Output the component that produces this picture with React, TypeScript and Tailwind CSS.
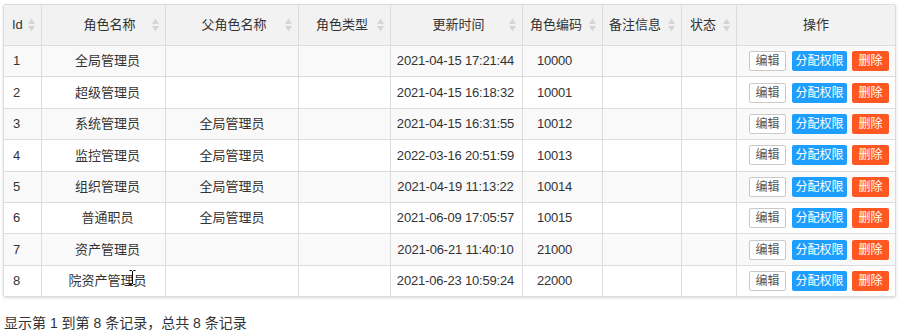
import React from "react";

const rows = [
  { id: "1", name: "全局管理员", parent: "", time: "2021-04-15 17:21:44", code: "10000" },
  { id: "2", name: "超级管理员", parent: "", time: "2021-04-15 16:18:32", code: "10001" },
  { id: "3", name: "系统管理员", parent: "全局管理员", time: "2021-04-15 16:31:55", code: "10012" },
  { id: "4", name: "监控管理员", parent: "全局管理员", time: "2022-03-16 20:51:59", code: "10013" },
  { id: "5", name: "组织管理员", parent: "全局管理员", time: "2021-04-19 11:13:22", code: "10014" },
  { id: "6", name: "普通职员", parent: "全局管理员", time: "2021-06-09 17:05:57", code: "10015" },
  { id: "7", name: "资产管理员", parent: "", time: "2021-06-21 11:40:10", code: "21000" },
  { id: "8", name: "院资产管理员", parent: "", time: "2021-06-23 10:59:24", code: "22000" },
];

function SortIcon() {
  return (
    <svg
      width="7"
      height="14"
      viewBox="0 0 7 14"
      className="absolute right-[6px] top-1/2 -translate-y-1/2"
    >
      <path d="M0 6 L3.5 0.5 L7 6 Z" fill="#d6d6d6" />
      <path d="M0 8 L7 8 L3.5 13.5 Z" fill="#d6d6d6" />
    </svg>
  );
}

const grid =
  "grid grid-cols-[38px_124px_133px_92px_132px_80px_79px_55px_158px]";

export default function App() {
  return (
    <div
      className="w-[899px] h-[336px] bg-white text-[#333]"
      style={{ fontFamily: '"Liberation Sans", Arial, "Noto Sans CJK SC", sans-serif' }}
    >
      <div className="pt-[4px] pl-[3px]">
        <div className="w-[893px] border border-[#dcdcdc] rounded-[2px] shadow-[0_1px_3px_rgba(0,0,0,0.14)] text-[13px]">
          {/* header */}
          <div className={`${grid} h-[41px] bg-[#f2f2f2] border-b border-[#dcdcdc]`}>
            <div className="relative flex items-center pl-[8px] border-r border-[#dcdcdc]">
              Id
              <SortIcon />
            </div>
            <div className="relative flex items-center justify-center pl-[12px] border-r border-[#dcdcdc]">
              角色名称
              <SortIcon />
            </div>
            <div className="relative flex items-center justify-center pl-[4px] border-r border-[#dcdcdc]">
              父角色名称
              <SortIcon />
            </div>
            <div className="relative flex items-center justify-center pr-[5px] border-r border-[#dcdcdc]">
              角色类型
              <SortIcon />
            </div>
            <div className="relative flex items-center justify-center pl-[4px] border-r border-[#dcdcdc]">
              更新时间
              <SortIcon />
            </div>
            <div className="relative flex items-center pl-[7px] border-r border-[#dcdcdc]">
              角色编码
              <SortIcon />
            </div>
            <div className="relative flex items-center pl-[6px] border-r border-[#dcdcdc]">
              备注信息
              <SortIcon />
            </div>
            <div className="relative flex items-center pl-[8px] border-r border-[#dcdcdc]">
              状态
              <SortIcon />
            </div>
            <div className="flex items-center justify-center">操作</div>
          </div>
          {/* body */}
          {rows.map((r, i) => (
            <div
              key={r.id}
              className={`${grid} ${i === rows.length - 1 ? "h-[30.4px]" : "h-[31.4px] border-b border-[#dcdcdc]"} ${
                i % 2 === 0 ? "bg-[#f9f9f9]" : "bg-white"
              }`}
            >
              <div className="flex items-center pl-[9px] border-r border-[#dcdcdc]">{r.id}</div>
              <div className="relative flex items-center justify-center pl-[8px] border-r border-[#dcdcdc]">
                {r.name}
                {r.id === "8" && (
                  <svg
                    width="7"
                    height="15"
                    viewBox="0 0 7 15"
                    className="absolute left-[87px] top-[4px]"
                  >
                    <path
                      d="M0.5 0.5 H2.5 L3.5 1.5 L4.5 0.5 H6.5 M3.5 1.5 V13.5 M0.5 14.5 H2.5 L3.5 13.5 L4.5 14.5 H6.5"
                      stroke="#000"
                      strokeWidth="1"
                      fill="none"
                    />
                  </svg>
                )}
              </div>
              <div className="flex items-center justify-center border-r border-[#dcdcdc]">{r.parent}</div>
              <div className="border-r border-[#dcdcdc]" />
              <div className="flex items-center justify-center pr-[2px] tracking-[-0.18px] border-r border-[#dcdcdc]">
                {r.time}
              </div>
              <div className="flex items-center justify-center pr-[16px] tracking-[-0.18px] border-r border-[#dcdcdc]">
                {r.code}
              </div>
              <div className="border-r border-[#dcdcdc]" />
              <div className="border-r border-[#dcdcdc]" />
              <div className="flex items-center pl-[12px] gap-[5px] text-[12px]">
                <button className="w-[37px] h-[20px] flex items-center justify-center border border-[#c9c9c9] bg-white text-[#555] rounded-[2px]">
                  编辑
                </button>
                <button className="w-[55px] h-[20px] flex items-center justify-center bg-[#1e9fff] text-white rounded-[2px] ml-[1px]">
                  分配权限
                </button>
                <button className="w-[37px] h-[20px] flex items-center justify-center bg-[#ff5722] text-white rounded-[2px]">
                  删除
                </button>
              </div>
            </div>
          ))}
        </div>
        <div className="mt-[16px] pl-[1px] text-[14px] leading-[20px]">
          显示第 1 到第 8 条记录，总共 8 条记录
        </div>
      </div>
    </div>
  );
}
